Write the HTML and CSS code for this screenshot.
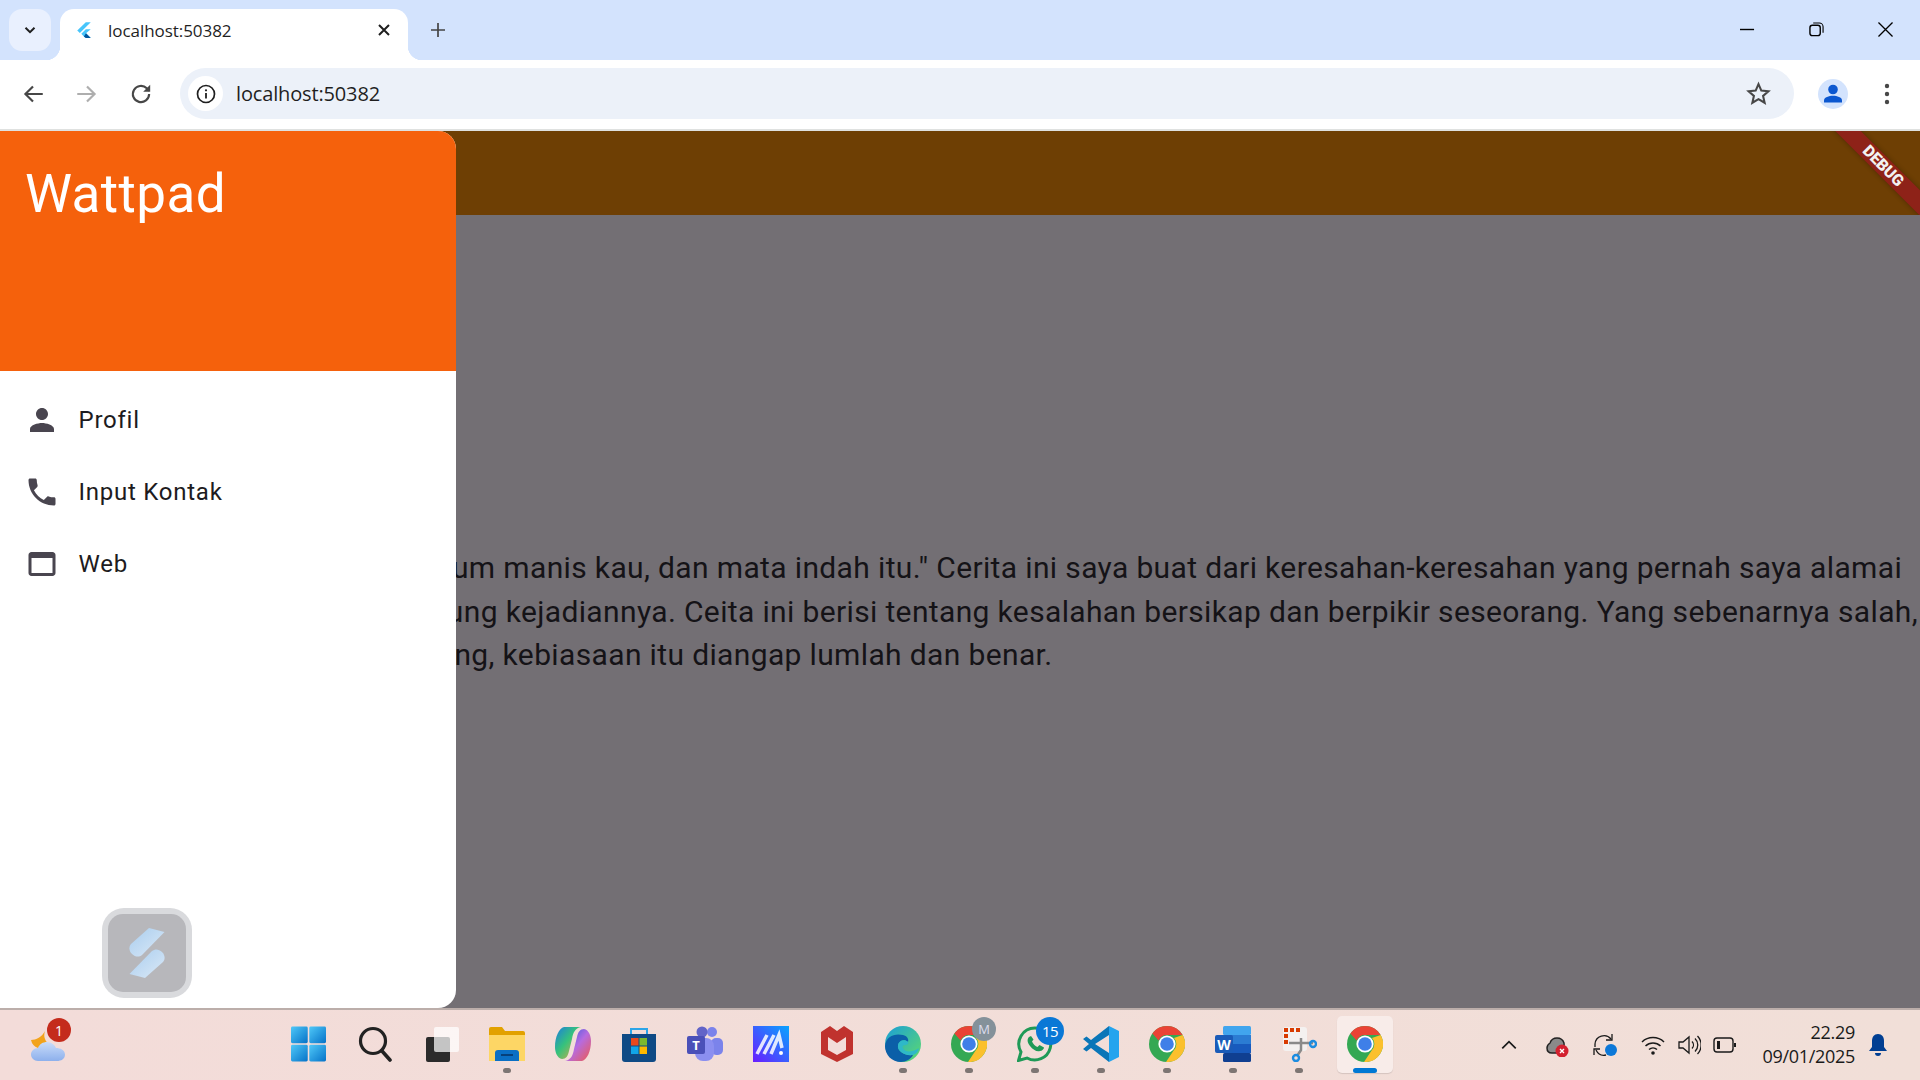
FILE: index.html
```html
<!DOCTYPE html>
<html lang="id">
<head>
<meta charset="utf-8">
<title>localhost:50382</title>
<link rel="stylesheet" href="styles.css">
</head>
<body>
<svg class="defs" width="0" height="0" aria-hidden="true">
  <defs>
    <symbol id="chrome" viewBox="0 0 36 36">
      <circle cx="18" cy="18" r="18" fill="#34a853"/>
      <path d="M18 0A18 18 0 0 1 33.6 9H18a9 9 0 0 0-8.4 5.6L3.4 7.4A18 18 0 0 1 18 0z" fill="#ea4335"/>
      <path d="M33.6 9A18 18 0 0 1 17 36l7.6-11.5A9 9 0 0 0 25 12z" fill="#fbc02d"/>
      <circle cx="18" cy="18" r="8.6" fill="#fff"/>
      <circle cx="18" cy="18" r="6.8" fill="#3f7fe8"/>
    </symbol>
    <linearGradient id="win" x1="0" y1="0" x2="1" y2="1"><stop offset="0" stop-color="#4fc8f8"/><stop offset="1" stop-color="#0572c8"/></linearGradient>
    <linearGradient id="copi" x1="0" y1="0" x2="1" y2="1"><stop offset="0" stop-color="#1b7ce0"/><stop offset=".45" stop-color="#36c27c"/><stop offset="1" stop-color="#f6a53a"/></linearGradient>
    <linearGradient id="copi2" x1="0" y1="0" x2="1" y2="1"><stop offset="0" stop-color="#2458e0"/><stop offset=".5" stop-color="#b66be0"/><stop offset="1" stop-color="#ee5a4e"/></linearGradient>
    <linearGradient id="ma" x1="1" y1="0" x2="0" y2="1"><stop offset="0" stop-color="#08a4ff"/><stop offset="1" stop-color="#6a1cff"/></linearGradient>
    <linearGradient id="edge" x1="0" y1="0" x2="1" y2="1"><stop offset="0" stop-color="#1a9ed8"/><stop offset="1" stop-color="#5fdc6b"/></linearGradient>
    <linearGradient id="cloud" x1="0" y1="0" x2="0" y2="1"><stop offset="0" stop-color="#c9dcfa"/><stop offset="1" stop-color="#8db0ec"/></linearGradient>
    <linearGradient id="slab" x1="0" y1="0" x2="1" y2="1"><stop offset="0" stop-color="#a9cdee"/><stop offset="1" stop-color="#dbe9f7"/></linearGradient>
  </defs>
</svg>

<header class="tabstrip">
  <div class="tabsearch">
    <svg class="i16" viewBox="0 0 16 16"><path d="M3.5 5.8 8 10.2l4.5-4.4" fill="none" stroke="#1f1f1f" stroke-width="2"/></svg>
  </div>
  <div class="tab">
    <svg class="favicon" viewBox="0 0 16 16"><path d="M9.6 1 2 8.4l2.3 2.3L14 1z" fill="#47c5fb"/><path d="M9.6 7.4 5.6 11.4l2.3 2.3 1.7 1.3H14l-4.2-4.1L14 7.4z" fill="#47c5fb"/><path d="m7.9 13.7 1.7 1.3H14l-4.2-4.1z" fill="#00569e"/></svg>
    <span class="tabtitle">localhost:50382</span>
    <svg class="i16 tabclose" viewBox="0 0 16 16"><path d="m3 3 10 10M13 3 3 13" stroke="#1f1f1f" stroke-width="2" fill="none"/></svg>
  </div>
  <svg class="newtab" viewBox="0 0 16 16"><path d="M8 1v14M1 8h14" stroke="#444" stroke-width="1.7" fill="none"/></svg>
  <div class="winctl">
    <svg class="winbtn" viewBox="0 0 16 16"><path d="M0 8h15" stroke="#000" stroke-width="1.5"/></svg>
    <svg class="winbtn" viewBox="0 0 16 16"><rect x="1" y="3.5" width="11" height="11" rx="2.6" fill="none" stroke="#000" stroke-width="1.5"/><path d="M4.5 1h6.5a4 4 0 0 1 4 4v6.5" fill="none" stroke="#000" stroke-width="1.2"/></svg>
    <svg class="winbtn" viewBox="0 0 16 16"><path d="m.5.5 15 15M15.500.5l-15 15" stroke="#000" stroke-width="1.4"/></svg>
  </div>
</header>

<nav class="toolbar">
  <svg class="navicon" viewBox="0 0 24 24"><path d="M21 12H5M12 5l-7 7 7 7" fill="none" stroke="#474747" stroke-width="2"/></svg>
  <svg class="navicon" viewBox="0 0 24 24"><path d="M3 12h16M12 5l7 7-7 7" fill="none" stroke="#aeaeae" stroke-width="2"/></svg>
  <svg class="navicon" viewBox="0 0 24 24"><path d="M19.5 12a7.500 7.500 0 1 1-2.200-5.300L19.500 9" fill="none" stroke="#474747" stroke-width="2"/><path d="M20.500 3.500V10H14z" fill="#474747"/></svg>
  <div class="omnibox">
    <div class="siteinfo">
      <svg class="i20" viewBox="0 0 20 20"><circle cx="10" cy="10" r="8.500" fill="none" stroke="#1f1f1f" stroke-width="1.700"/><path d="M10 9v5.500" stroke="#1f1f1f" stroke-width="1.800"/><circle cx="10" cy="6.300" r="1.100" fill="#1f1f1f"/></svg>
    </div>
    <span class="url">localhost:50382</span>
    <svg class="star" viewBox="0 0 24 24"><path d="m12 3 2.700 6.200 6.800.6-5.100 4.500 1.500 6.600L12 17.400l-5.900 3.500 1.500-6.600L2.500 9.800l6.800-.6z" fill="none" stroke="#474747" stroke-width="2"/></svg>
  </div>
  <div class="avatar">
    <svg class="i24" viewBox="0 0 24 24"><circle cx="12" cy="7.500" r="4.800" fill="#0b57d0"/><path d="M3 20.500v-2.200c0-3 5-4.500 9-4.500s9 1.500 9 4.500v2.200z" fill="#0b57d0"/></svg>
  </div>
  <svg class="menu" viewBox="0 0 6 24"><circle cx="3" cy="4" r="2.200" fill="#474747"/><circle cx="3" cy="12" r="2.200" fill="#474747"/><circle cx="3" cy="20" r="2.200" fill="#474747"/></svg>
</nav>

<main class="app">
  <div class="scaffold">
    <div class="appbar"></div>
    <div class="content">
      <p class="line">Senyum manis kau, dan mata indah itu." Cerita ini saya buat dari keresahan-keresahan yang pernah saya alamai</p>
      <p class="line">Bingung kejadiannya. Ceita ini berisi tentang kesalahan bersikap dan berpikir seseorang. Yang sebenarnya salah,</p>
      <p class="line">Sedang, kebiasaan itu diangap lumlah dan benar.</p>
    </div>
  </div>
  <div class="ribbon"><div class="ribbon-band">DEBUG</div></div>
  <aside class="drawer">
    <div class="drawer-head">Wattpad</div>
    <ul class="drawer-list">
      <li class="drawer-item">
        <svg class="i36" viewBox="0 0 24 24"><path d="M12 12c2.210 0 4-1.790 4-4s-1.790-4-4-4-4 1.790-4 4 1.790 4 4 4zm0 2c-2.670 0-8 1.340-8 4v2h16v-2c0-2.660-5.330-4-8-4z"/></svg>
        <span>Profil</span>
      </li>
      <li class="drawer-item">
        <svg class="i36" viewBox="0 0 24 24"><path d="M6.620 10.790c1.440 2.830 3.760 5.140 6.590 6.590l2.200-2.200c.27-.27.67-.36 1.020-.24 1.120.37 2.330.57 3.570.57.55 0 1 .45 1 1V20c0 .55-.45 1-1 1-9.390 0-17-7.610-17-17 0-.55.45-1 1-1h3.500c.55 0 1 .45 1 1 0 1.250.2 2.450.57 3.570.11.35.03.74-.25 1.020l-2.200 2.200z"/></svg>
        <span>Input Kontak</span>
      </li>
      <li class="drawer-item">
        <svg class="i36" viewBox="0 0 24 24"><path d="M19 4H5c-1.110 0-2 .9-2 2v12c0 1.100.89 2 2 2h14c1.100 0 2-.9 2-2V6c0-1.100-.89-2-2-2zm0 14H5V8h14v10z"/></svg>
        <span>Web</span>
      </li>
    </ul>
    <div class="floater">
      <div class="floater-in">
        <svg class="floater-logo" viewBox="0 0 36 50"><path d="M20 0 35.500 4 13 27c-3 2.500-7 2-10-1s-3.500-7-1-10z" fill="url(#slab)"/><path d="M16 50 .5 46 23 23c3-2.500 7-2 10 1s3.500 7 1 10z" fill="url(#slab)"/></svg>
      </div>
    </div>
  </aside>
</main>

<footer class="taskbar">
  <div class="weather">
    <svg class="i36" viewBox="0 0 36 36"><path d="M15 5a11 11 0 0 0 9 15L8 22A11 11 0 0 1 1 14c5 0 11-3 14-9z" fill="#f2a31c"/><path d="M8 35c-4 0-7-3-7-6.500S4 22 8 22c1.500-4 5-6 9-6s8 3 9 6c4 0 9 2 9 6.500S31 35 27 35z" fill="url(#cloud)"/></svg>
    <span class="badge badge-red">1</span>
  </div>

  <div class="apps">
    <div class="app-slot"><svg class="win11" viewBox="0 0 36 36"><rect width="17.200" height="17.200" rx="1.500" fill="url(#win)"/><rect x="18.800" width="17.200" height="17.200" rx="1.500" fill="url(#win)"/><rect y="18.800" width="17.200" height="17.200" rx="1.500" fill="url(#win)"/><rect x="18.800" y="18.800" width="17.200" height="17.200" rx="1.500" fill="url(#win)"/></svg></div>
    <div class="app-slot"><svg class="i36" viewBox="0 0 36 36"><circle cx="16" cy="15" r="12.500" fill="none" stroke="#222" stroke-width="3.200"/><path d="m25 25 8 9" stroke="#222" stroke-width="3.600" stroke-linecap="round"/></svg></div>
    <div class="app-slot"><svg class="i36" viewBox="0 0 36 36"><rect x="3" y="11" width="24" height="25" rx="2" fill="#2b2b2b"/><rect x="11" y="1" width="25" height="25" rx="2" fill="#fff" fill-opacity=".72"/></svg></div>
    <div class="app-slot run"><svg class="i36" viewBox="0 0 36 36"><path d="M0 3a2 2 0 0 1 2-2h11l3 4h18a2 2 0 0 1 2 2v3H0z" fill="#e2a100"/><path d="M0 9h36v26H0z" fill="#fdd665"/><path d="M6 35V27a3 3 0 0 1 3-3h18a3 3 0 0 1 3 3v8z" fill="#0a6fc4"/><rect x="12" y="28" width="12" height="2" fill="#06407a"/></svg></div>
    <div class="app-slot"><svg class="i36" viewBox="0 0 36 36"><path d="M9 1h17c-6 1-8 6-9 12l-3 12c-1 5-3 8-7 8-5-1-7-7-7-12C0 11 4 2 9 1z" fill="url(#copi)"/><path d="M27 35H10c6-1 8-6 9-12l3-12c1-5 3-8 7-8 5 1 7 7 7 12 0 10-4 19-9 20z" fill="url(#copi2)"/></svg></div>
    <div class="app-slot"><svg class="i36" viewBox="0 0 36 36"><path d="M10 9V3h16v6" fill="none" stroke="#2ca5e8" stroke-width="2"/><path d="M1 8h34v25a3 3 0 0 1-3 3H4a3 3 0 0 1-3-3z" fill="#0f4a85"/><rect x="10" y="12" width="7.500" height="7.500" fill="#e8491d"/><rect x="18.500" y="12" width="7.500" height="7.500" fill="#7cb82f"/><rect x="10" y="20.500" width="7.500" height="7.500" fill="#11a5e8"/><rect x="18.500" y="20.500" width="7.500" height="7.500" fill="#fdb900"/></svg></div>
    <div class="app-slot"><svg class="i36" viewBox="0 0 36 36"><circle cx="25" cy="6" r="5" fill="#7b83eb"/><circle cx="15" cy="6" r="5.500" fill="#6264c8"/><rect x="24" y="12" width="12" height="17" rx="5" fill="#7b83eb"/><rect x="8" y="12" width="19" height="23" rx="8" fill="#8b8ff0"/><rect x="0" y="10" width="18" height="18" rx="2" fill="#4a50b8"/><text class="teams-t" x="9" y="24" text-anchor="middle">T</text></svg></div>
    <div class="app-slot"><svg class="i36" viewBox="0 0 36 36"><rect width="36" height="36" fill="url(#ma)"/><path d="M4 28 14 9M11 28 21 9M18 28 26 9l3 13" fill="none" stroke="#fff" stroke-opacity=".85" stroke-width="3.500"/><circle cx="28" cy="27" r="2" fill="#fff"/></svg></div>
    <div class="app-slot"><svg class="i36" viewBox="0 0 36 36"><path d="M2 6 11 0l7 5 7-5 9 6v22l-16 8-16-8z" fill="#c0322e"/><path d="M9 11v13l9 5 9-5V11l-9 6z" fill="#f3dcd9"/></svg></div>
    <div class="app-slot run"><svg class="i36" viewBox="0 0 36 36"><circle cx="18" cy="18" r="18" fill="url(#edge)"/><path d="M0 20C1 10 10 7 18 9c4 1 6 4 5 7-3-3-9-2-10 3-1 6 6 11 15 10-2 4-7 7-12 7C7 36 0 29 0 20z" fill="#0b5fa8"/><path d="M13 19c1-5 7-6 10-3 1 2-1 3-3 3-3 0-4 3 1 6 3 1 9 0 13-3-1 4-3 6-6 7-9 1-16-4-15-10z" fill="#2eb8c8"/></svg></div>
    <div class="app-slot run"><svg class="i36"><use href="#chrome"/></svg><span class="badge badge-grey">M</span></div>
    <div class="app-slot run"><svg class="i36" viewBox="0 0 36 36"><path d="M18 2a16 16 0 0 0-14 24L1.500 34.500 10 32A16 16 0 1 0 18 2z" fill="none" stroke="#1f9a57" stroke-width="3"/><path d="M12 11c-2 2-2 5 1 9s7 6 10 5c2 0 4-2 4-3.500l-4.500-2.500-2 2c-2-.5-4.500-3-5.500-5.500l1.500-2L14 10z" fill="#1f9a57"/></svg><span class="badge badge-blue">15</span></div>
    <div class="app-slot run"><svg class="i36" viewBox="0 0 36 36"><path d="M26 0 36 5v26l-10 5z" fill="#24a4ee"/><path d="M26 0v9L12 18l14 9v9L8 22l-4.500 3.500L0 23l6-5-6-5 3.500-2.500L8 14z" fill="#0a76b8"/></svg></div>
    <div class="app-slot run"><svg class="i36"><use href="#chrome"/></svg></div>
    <div class="app-slot run"><svg class="i36" viewBox="0 0 36 36"><rect x="8" width="28" height="9" rx="1.500" fill="#41a5ee"/><rect x="8" y="9" width="28" height="9" fill="#2b7cd3"/><rect x="8" y="18" width="28" height="9" fill="#185abd"/><rect x="8" y="27" width="28" height="9" rx="1.500" fill="#103f91"/><rect y="9" width="18" height="18" rx="2" fill="#1a5bb8"/><text class="word-w" x="9" y="23.500" text-anchor="middle">W</text></svg></div>
    <div class="app-slot run"><svg class="i36" viewBox="0 0 36 36"><rect x="2" y="1" width="24" height="24" rx="3" fill="#f4f1f0"/><path d="M3 2h4v4H3zM9 2h4v4H9zM15 2h4v4h-4zM3 8h4v4H3zM3 14h4v4H3z" fill="#d83b01"/><path d="M8 17h24M20 12v12l-4 6" fill="none" stroke="#8a8a8a" stroke-width="2.500"/><circle cx="32" cy="18" r="3" fill="none" stroke="#1c8ce0" stroke-width="2.400"/><circle cx="15" cy="32" r="3" fill="none" stroke="#1c8ce0" stroke-width="2.400"/></svg></div>
    <div class="app-slot active"><svg class="i36"><use href="#chrome"/></svg></div>
  </div>

  <div class="tray">
    <svg class="tray-chev" viewBox="0 0 16 16"><path d="M2 11 8 5l6 6" fill="none" stroke="#1a1a1a" stroke-width="1.500"/></svg>
    <div class="tray-cloud">
      <svg class="i24" viewBox="0 0 24 24"><path d="M7 20c-3 0-5-2-5-5 0-2.500 1.500-4 3-5 1-3 4-5 7-5 3.500 0 6 2 7 5 1 3-2 10-6 10z" fill="#8a8a8a" stroke="#222" stroke-width="1.500"/><circle cx="17" cy="18" r="6.500" fill="#d3202f"/><path d="m15 16 4 4m0-4-4 4" stroke="#fff" stroke-width="1.400"/></svg>
    </div>
    <svg class="i24 tray-sync" viewBox="0 0 24 24"><path d="M2 14V11a9 9 0 0 1 16-5" fill="none" stroke="#1a1a1a" stroke-width="1.300"/><path d="M19 1v6h-6M1 22v-6h6" fill="none" stroke="#1a1a1a" stroke-width="1.300"/><path d="M3 17c2 4 6 6 10 5" fill="none" stroke="#1a1a1a" stroke-width="1.300"/><circle cx="18" cy="17" r="6" fill="#0d78d8"/></svg>
    <svg class="i24 tray-wifi" viewBox="0 0 24 24"><path d="M1 9a16 16 0 0 1 22 0M4.500 13a11 11 0 0 1 15 0M8 16.500a6 6 0 0 1 8 0" fill="none" stroke="#1a1a1a" stroke-width="1.500"/><circle cx="12" cy="20" r="1.800" fill="#1a1a1a"/></svg>
    <svg class="i24 tray-vol" viewBox="0 0 24 24"><path d="M2 9v6h4l6 5V4L6 9z" fill="none" stroke="#1a1a1a" stroke-width="1.300"/><path d="M15 8.500a5 5 0 0 1 0 7M18 5.500a9 9 0 0 1 0 13M20.500 3a13 13 0 0 1 0 18" fill="none" stroke="#1a1a1a" stroke-width="1.300"/></svg>
    <svg class="i24 tray-bat" viewBox="0 0 24 24"><rect x="1" y="5" width="19" height="14" rx="3" fill="none" stroke="#1a1a1a" stroke-width="1.400"/><rect x="4" y="8" width="3" height="8" fill="#1a1a1a"/><path d="M21 10h2v4h-2z" fill="#1a1a1a"/></svg>
    <div class="clock"><span>22.29</span><span>09/01/2025</span></div>
    <svg class="bell" viewBox="0 0 20 24"><path d="M10 1c4 0 6 3 6 7v6l3 4H1l3-4V8c0-4 2-7 6-7z" fill="#003e92"/><path d="M7 20h6a3 3 0 0 1-6 0z" fill="#003e92"/></svg>
  </div>
</footer>
</body>
</html>
```

FILE: styles.css
```css
* { box-sizing: border-box; }
html, body { margin: 0; height: 100%; overflow: hidden; }
body {
  display: flex;
  flex-direction: column;
  height: 100vh;
  font-family: Roboto, "Liberation Sans", sans-serif;
  background: #fff;
}
.defs { position: absolute; }
svg { display: block; flex: none; }
.i16 { width: 16px; height: 16px; }
.i20 { width: 20px; height: 20px; }
.i24 { width: 24px; height: 24px; }
.i36 { width: 36px; height: 36px; }
.win11 { width: 35px; height: 36px; margin-right: 2px; }

/* Tab strip */
.tabstrip {
  height: 60px;
  flex: none;
  background: #d3e3fd;
  display: flex;
  align-items: flex-end;
  padding-left: 9px;
}
.tabsearch {
  width: 42px;
  height: 42px;
  margin-bottom: 9px;
  border-radius: 13px;
  background: #e9f0fe;
  display: flex;
  align-items: center;
  justify-content: center;
}
.tab {
  position: relative;
  width: 348px;
  height: 51px;
  margin-left: 9px;
  padding: 0 16px 9px 15px;
  background: #fff;
  border-radius: 14px 14px 0 0;
  display: flex;
  align-items: center;
}
.tab::before, .tab::after {
  content: "";
  position: absolute;
  bottom: 0;
  width: 14px;
  height: 14px;
}
.tab::before { left: -14px; background: radial-gradient(circle at 0 0, transparent 14px, #fff 14.5px); }
.tab::after { right: -14px; background: radial-gradient(circle at 100% 0, transparent 14px, #fff 14.5px); }
.favicon { width: 18px; height: 18px; }
.tabtitle {
  margin-left: 15px;
  flex: 1;
  font: 17px "Open Sans", "Noto Sans", sans-serif;
  letter-spacing: -0.05px;
  color: #1f1f1f;
}
.newtab { width: 16px; height: 16px; margin: 0 0 22px 22px; }
.winctl {
  margin-left: auto;
  display: flex;
  align-items: center;
  gap: 54px;
  padding-right: 27px;
  margin-bottom: 23px;
}
.winbtn { width: 15px; height: 15px; }

/* Toolbar */
.toolbar {
  height: 71px;
  flex: none;
  background: #fff;
  border-bottom: 2px solid #dfe1e0;
  border-radius: 12px 12px 0 0;
  margin-top: 0;
  position: relative;
  display: flex;
  align-items: center;
  padding: 0 0 2px 20px;
}
.navicon { width: 26px; height: 26px; margin-right: 28px; }
.omnibox {
  width: 1614px;
  height: 51px;
  margin-left: -2px;
  border-radius: 26px;
  background: #ecf1f9;
  display: flex;
  align-items: center;
  padding: 0 16px 0 8px;
}
.siteinfo {
  width: 35px;
  height: 35px;
  border-radius: 50%;
  background: #fff;
  display: flex;
  align-items: center;
  justify-content: center;
}
.url {
  margin-left: 13px;
  flex: 1;
  font: 20px "Open Sans", "Noto Sans", sans-serif;
  letter-spacing: -0.15px;
  color: #1f1f1f;
}
.star { width: 25px; height: 25px; margin-right: 7px; }
.avatar {
  width: 30px;
  height: 30px;
  margin-left: 24px;
  border-radius: 50%;
  background: #d3e3fd;
  display: flex;
  align-items: center;
  justify-content: center;
}
.menu { width: 6px; height: 24px; margin-left: 36px; }

/* App */
.app {
  position: relative;
  flex: 1;
  min-height: 0;
  overflow: hidden;
  background: #736f74;
}
.scaffold { height: 100%; display: flex; flex-direction: column; }
.appbar { height: 84px; flex: none; background: #6e3f04; }
.content {
  flex: 1;
  display: flex;
  flex-direction: column;
  justify-content: center;
  padding-left: 386px;
  min-height: 0;
  overflow: hidden;
}
.line {
  margin: 0;
  white-space: nowrap;
  font-size: 30px;
  line-height: 43.75px;
  letter-spacing: .36px;
  color: #151317;
}
.ribbon {
  position: absolute;
  top: 0;
  right: 0;
  width: 100px;
  height: 84px;
  overflow: hidden;
}
.ribbon-band {
  position: absolute;
  left: -17px;
  top: 26px;
  width: 160px;
  height: 18px;
  transform: rotate(45deg);
  background: #8e2218;
  box-shadow: 0 0 5px rgba(0,0,0,.3);
  color: #f2f2f2;
  font-size: 16px;
  font-weight: 900;
  line-height: 18px;
  text-align: center;
  letter-spacing: -.2px;
}
.drawer {
  position: absolute;
  left: 0;
  top: 0;
  bottom: 0;
  width: 456px;
  background: #fff;
  border-radius: 0 18px 18px 0;
  overflow: hidden;
}
.drawer-head {
  height: 240px;
  padding: 29px 0 0 25px;
  background: #f5610c;
  color: #fff;
  font-size: 53px;
  line-height: 68px;
  letter-spacing: .4px;
}
.drawer-list { list-style: none; margin: 0; padding: 13px 0 0; }
.drawer-item {
  height: 72px;
  display: flex;
  align-items: center;
  gap: 18.500px;
  padding-left: 24px;
  font-size: 24px;
  letter-spacing: .75px;
  color: #1d1b20;
}
.drawer-item svg { fill: #49454f; }
.floater {
  position: absolute;
  left: 102px;
  top: 777px;
  width: 90px;
  height: 90px;
  padding: 6px;
  border-radius: 22px;
  background: #d9dadd;
}
.floater-in {
  height: 100%;
  border-radius: 15px;
  background: #b7b7bb;
  display: flex;
  align-items: center;
  justify-content: center;
}
.floater-logo { width: 36px; height: 50px; }

/* Taskbar */
.taskbar {
  position: relative;
  height: 72px;
  flex: none;
  border-top: 2px solid #bcaeaa;
  background: linear-gradient(90deg, #f3dcd9, #f1dfd8);
  display: flex;
  align-items: flex-start;
}
.weather {
  position: relative;
  width: 36px;
  height: 36px;
  margin: 16px 0 0 30px;
}
.badge {
  position: absolute;
  display: flex;
  align-items: center;
  justify-content: center;
  border-radius: 50%;
  color: #fff;
  font: 15px "Open Sans", "Noto Sans", sans-serif;
}
.badge-red { left: 17px; top: -8px; width: 24px; height: 24px; background: #c42b1c; font-size: 14px; }
.badge-grey { width: 24px; height: 24px; background: #84919a; color: #dde; font-size: 13px; }
.badge-blue { width: 28px; height: 28px; background: #0a78d6; font-size: 15px; letter-spacing: -.5px; }
.apps {
  position: absolute;
  left: 276px;
  top: 0;
  display: flex;
}
.app-slot {
  position: relative;
  width: 66px;
  height: 70px;
  display: flex;
  align-items: flex-start;
  justify-content: center;
  padding-top: 16px;
}
.app-slot .badge-grey { left: 36px; }
.app-slot .badge-blue { left: 34px; }
.app-slot .badge { top: 7px; }
.app-slot.run::after {
  content: "";
  position: absolute;
  left: 29px;
  top: 58px;
  width: 8px;
  height: 5px;
  border-radius: 3px;
  background: #7d7573;
}
.app-slot.active::before {
  content: "";
  position: absolute;
  left: 5px;
  top: 6px;
  width: 56px;
  height: 57px;
  border-radius: 5px;
  background: #f8ece9;
  box-shadow: 0 1px 1px rgba(0,0,0,.12);
}
.app-slot.active svg { position: relative; }
.app-slot.active::after {
  content: "";
  position: absolute;
  left: 21px;
  top: 58px;
  width: 24px;
  height: 5px;
  border-radius: 3px;
  background: #0078d4;
}
.teams-t, .word-w { fill: #fff; font: 700 13px "Open Sans", sans-serif; }
.word-w { font-size: 14px; }
.tray {
  margin-left: auto;
  height: 70px;
  display: flex;
  align-items: center;
  padding-right: 32px;
}
.tray-chev { width: 18px; height: 18px; }
.tray-cloud { margin-left: 27px; }
.tray-sync { margin-left: 24px; }
.tray-wifi { margin-left: 24px; }
.tray-vol { margin-left: 12px; }
.tray-bat { margin-left: 12px; }
.clock {
  display: flex;
  flex-direction: column;
  align-items: flex-end;
  margin: -2px 0 0 25px;
  font: 18px/24px "Open Sans", "Noto Sans", sans-serif;
  letter-spacing: -.3px;
  color: #1a1a1a;
}
.bell { width: 20px; height: 24px; margin-left: 13px; }
```
